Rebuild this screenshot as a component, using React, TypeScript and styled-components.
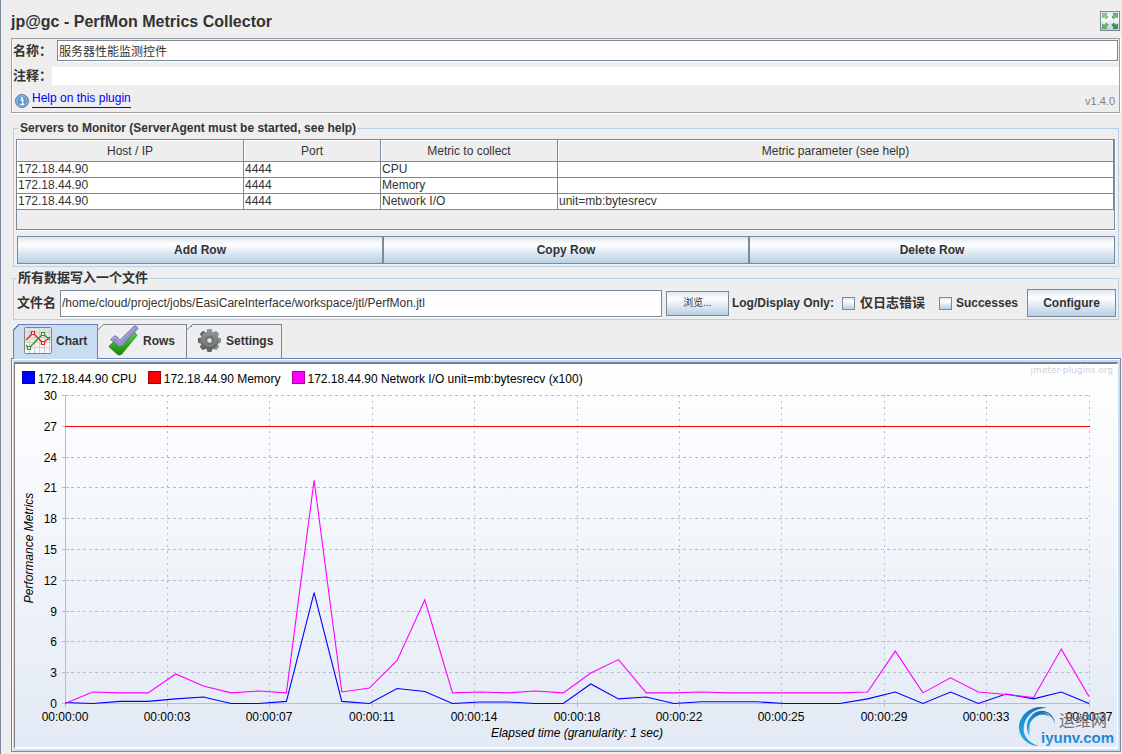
import React from "react";
import styled, { createGlobalStyle } from "styled-components";

const edge = "#7a8a99";
const accent = "#6382bf";
const selected = "#c8ddf2";
const metal = "linear-gradient(#dde8f3 0%, #ffffff 30%, #dde8f3 62%, #b8cfe5 100%)";

const GlobalStyle = createGlobalStyle`
  * { box-sizing: border-box; }
  body {
    margin: 0;
    background: #eeeeee;
    color: #333333;
    font: 12px/14px "Liberation Sans", "Noto Sans CJK SC", sans-serif;
  }
  button, input { font: inherit; color: inherit; }
`;

const Page = styled.div`
  min-height: 100vh;
  border-left: 1px solid ${edge};
  padding: 0 1px 2px 10px;
  position: relative;
`;

const Header = styled.header`
  display: flex;
  justify-content: space-between;
  align-items: center;
  height: 38px;
  padding: 4px 1px 0 0;
`;

const Title = styled.h1`
  margin: 0;
  padding-top: 2px;
  font-size: 16px;
  line-height: 20px;
`;

const ExpandButton = styled.button`
  width: 20px;
  height: 20px;
  padding: 0;
  border: 1px solid ${edge};
  background: ${metal};
  display: flex;
`;

const InfoPanel = styled.section`
  margin-right: 1px;
  padding-top: 1px;
  border: 1px solid #a0a0a0;
  box-shadow: inset 1px 0 0 #ffffff, 0 1px 0 #ffffff, 1px 0 0 #ffffff;
  display: flex;
  flex-direction: column;
  gap: 6px;
`;

const InfoRow = styled.div`
  display: flex;
  align-items: center;
`;

const BoldLabel = styled.label<{ $width?: number }>`
  width: ${(p) => (p.$width ? `${p.$width}px` : "auto")};
  padding-left: 1px;
  flex: none;
  font-size: 13px;
  font-weight: bold;
  white-space: nowrap;
`;

const TextField = styled.input<{ $height: number; $plain?: boolean }>`
  flex: 1;
  min-width: 0;
  height: ${(p) => p.$height}px;
  margin-right: ${(p) => (p.$plain ? 0 : 1)}px;
  padding: 0 1px;
  border: ${(p) => (p.$plain ? "none" : `1px solid ${edge}`)};
  border-radius: 0;
  background: #ffffff;
  box-shadow: ${(p) => (p.$plain ? "none" : "0 1px 0 #ffffff")};
  outline: none;
`;

const HelpRow = styled.div`
  display: flex;
  align-items: center;
  gap: 3px;
  height: 27px;
  margin-top: -6px;
  padding: 0 4px 0 3px;
`;

const HelpLink = styled.a`
  color: #0000ff;
  text-decoration: none;
  border-bottom: 1px solid #0000ff;
  line-height: 18px;
  height: 19px;
`;

const Version = styled.span`
  margin-left: auto;
  padding-top: 5px;
  color: #808080;
  font-size: 11px;
`;

const Group = styled.fieldset<{ $gap: number }>`
  min-width: 0;
  margin: ${(p) => p.$gap}px 2px 0;
  padding: 4px 2px 2px;
  border: 1px solid #b8cfe5;
`;

const GroupTitle = styled.legend<{ $large?: boolean }>`
  margin-left: ${(p) => (p.$large ? 0 : 2)}px;
  padding: 0 2px;
  font-size: ${(p) => (p.$large ? 13 : 12)}px;
  line-height: 14px;
  font-weight: bold;
`;

const TableFrame = styled.div`
  height: 91px;
  margin-right: 1px;
  border: 1px solid ${edge};
  box-shadow: 1px 1px 0 #ffffff;
`;

const Table = styled.table`
  width: 100%;
  table-layout: fixed;
  border-collapse: separate;
  border-spacing: 0;
`;

const HeadCell = styled.th`
  height: 22px;
  padding: 0;
  border-right: 1px solid ${edge};
  border-bottom: 1px solid ${edge};
  box-shadow: inset 1px 1px 0 #ffffff;
  font-weight: normal;
`;

const Cell = styled.td`
  height: 16px;
  padding: 0 1px;
  line-height: 15px;
  background: #ffffff;
  border-right: 1px solid ${edge};
  border-bottom: 1px solid ${edge};
`;

const ButtonRow = styled.div`
  display: grid;
  grid-template-columns: repeat(3, 1fr);
  margin: 6px 1px 0;
`;

const Button = styled.button<{ $height: number; $width?: number; $light?: boolean }>`
  height: ${(p) => p.$height}px;
  width: ${(p) => (p.$width ? `${p.$width}px` : "100%")};
  flex: none;
  padding: 0;
  border: 1px solid ${edge};
  border-radius: 0;
  background: ${metal};
  font-size: ${(p) => (p.$light ? 10 : 12)}px;
  font-weight: ${(p) => (p.$light ? "normal" : "bold")};
`;

const FileRow = styled.div`
  display: flex;
  align-items: center;
  gap: 3px;
  height: 28px;
`;

const CheckGroup = styled.div`
  display: flex;
  align-items: center;
  gap: 4px;
  margin-left: 5px;
  padding-right: 6px;
`;

const CheckBox = styled.input`
  appearance: none;
  width: 13px;
  height: 13px;
  margin: 0;
  border: 1px solid ${edge};
  background: ${metal};
`;

const BoldText = styled.span`
  font-weight: bold;
  white-space: nowrap;
`;

const TabBar = styled.div`
  display: flex;
  margin: 4px 2px 0;
`;

const Tab = styled.button<{ $active?: boolean; $width: number }>`
  position: relative;
  display: flex;
  align-items: center;
  gap: 4px;
  width: ${(p) => p.$width}px;
  height: ${(p) => (p.$active ? 35 : 34)}px;
  margin-bottom: ${(p) => (p.$active ? -1 : 0)}px;
  padding: 0 0 2px 10px;
  z-index: ${(p) => (p.$active ? 1 : 0)};
  border: 0 solid ${(p) => (p.$active ? accent : edge)};
  border-width: 1px 1px 0 ${(p) => (p.$active ? 1 : 0)}px;
  background: ${(p) => (p.$active ? selected : "#eeeeee")};
  font-weight: bold;
  &::before {
    content: "";
    position: absolute;
    top: -1px;
    left: ${(p) => (p.$active ? -1 : 0)}px;
    width: 7px;
    height: 7px;
    background: linear-gradient(
      135deg,
      #eeeeee calc(50% - 1px),
      ${(p) => (p.$active ? accent : edge)} calc(50% - 1px),
      ${(p) => (p.$active ? accent : edge)} 50%,
      transparent 50%
    );
  }
`;

const TabPanel = styled.section`
  padding: 3px 2px 2px;
  border: 1px solid ${accent};
  border-bottom-color: ${edge};
  border-right-color: ${edge};
  background: ${selected};
  box-shadow: inset 1px 1px 0 #ffffff;
`;

const ChartBox = styled.div`
  position: relative;
  border-style: solid;
  border-width: 2px 1px 2px 1px;
  border-color: #808080 #ffffff #ffffff #808080;
  background: linear-gradient(#ffffff, #e3eaf5);
  color: #000000;
`;

const Legend = styled.ul`
  display: flex;
  gap: 11px;
  height: 23px;
  margin: 0;
  padding: 7px 0 0 7px;
  list-style: none;
`;

const LegendItem = styled.li`
  display: flex;
  gap: 3px;
  height: 14px;
  line-height: 16px;
`;

const Swatch = styled.span<{ $color: string }>`
  width: 13px;
  height: 13px;
  background: ${(p) => p.$color};
  border: 1px solid rgba(0, 0, 0, 0.35);
`;

const Credit = styled.span`
  position: absolute;
  top: 0;
  right: 4px;
  color: #cdd0d8;
  font: 9px/12px "DejaVu Sans", sans-serif;
`;

const Plot = styled.svg`
  display: block;
  width: 100%;
  height: auto;
  font-size: 12px;
`;

const AxisCaption = styled.p`
  margin: 0;
  height: 22px;
  padding-left: 22px;
  text-align: center;
  line-height: 17px;
  font-style: italic;
`;

const Watermark = styled.div`
  position: absolute;
  right: 5px;
  bottom: 4px;
  width: 100px;
  height: 46px;
`;

type Row = [string, string, string, string];

const rows: Row[] = [
  ["172.18.44.90", "4444", "CPU", ""],
  ["172.18.44.90", "4444", "Memory", ""],
  ["172.18.44.90", "4444", "Network I/O", "unit=mb:bytesrecv"],
];

const series = [
  { name: "172.18.44.90 CPU", color: "#0000ff" },
  { name: "172.18.44.90 Memory", color: "#ff0000" },
  { name: "172.18.44.90 Network I/O unit=mb:bytesrecv (x100)", color: "#ff00ff" },
];

const cpu = [
  0.1, 0, 0.2, 0.2, 0.45, 0.63, 0, 0, 0.2, 10.8, 0.2, 0, 1.46, 1.17, 0, 0.15, 0.15, 0, 0, 1.9,
  0.45, 0.63, 0, 0.17, 0.17, 0.17, 0, 0, 0, 0.45, 1.12, 0, 1.12, 0, 0.93, 0.45, 1.12, 0,
];
const network = [
  0, 1.12, 1.03, 1.03, 2.87, 1.7, 1.03, 1.22, 1.03, 21.75, 1.12, 1.5, 4.2, 10.1, 1.03, 1.12, 1.03,
  1.22, 1.03, 2.97, 4.28, 1.03, 1.03, 1.12, 1.03, 1.03, 1.03, 1.03, 1.03, 1.12, 5.1, 1.03, 2.5,
  1.12, 0.88, 0.58, 5.3, 0.68,
];
const times = ["00", "03", "07", "11", "14", "18", "22", "25", "29", "33", "37"];

const plot = { left: 50, right: 1074, top: 8, bottom: 316 };
const px = (i: number) => plot.left + (i * (plot.right - plot.left)) / (cpu.length - 1);
const py = (v: number) => plot.bottom - (v * (plot.bottom - plot.top)) / 30;
const line = (data: number[]) => data.map((v, i) => `${px(i).toFixed(1)},${(py(v) + 0.5).toFixed(1)}`).join(" ");
const tickX = (i: number) => Math.floor(plot.left + (i * (plot.right - plot.left)) / 10);

function Chart() {
  return (
    <Plot viewBox="0 0 1102 338" role="img" aria-label="Performance metrics over elapsed time">
      <g stroke="#b9bdc7" fill="none">
        {Array.from({ length: 11 }, (_, i) => {
          const y = Math.round(py(i * 3)) + 0.5;
          const x = tickX(i) + 0.5;
          return (
            <g key={i}>
              {i > 0 && <path d={`M${plot.left} ${y}H${plot.right}`} strokeDasharray="3 3" />}
              {i > 0 && <path d={`M${x} ${plot.top}V${plot.bottom}`} strokeDasharray="2 4" />}
              <path d={`M${plot.left - 3} ${y}h7M${x} ${plot.bottom - 3}v7`} />
            </g>
          );
        })}
        <path d={`M${plot.left + 0.5} ${plot.top}V${plot.bottom + 0.5}H${plot.right}`} />
      </g>
      <g textAnchor="end">
        {Array.from({ length: 11 }, (_, i) => (
          <text key={i} x={42} y={Math.round(py(i * 3)) + 5}>{i * 3}</text>
        ))}
      </g>
      <g textAnchor="middle">
        {times.map((t, i) => (
          <text key={t} x={tickX(i)} y={334}>{`00:00:${t}`}</text>
        ))}
        <text transform="translate(18 161) rotate(-90)" fontStyle="italic">Performance Metrics</text>
      </g>
      <polyline points={line(cpu)} fill="none" stroke="#0000ff" strokeWidth="1.1" />
      <path d={`M${plot.left} ${Math.round(py(27)) + 0.5}H${plot.right + 1}`} stroke="#ff0000" />
      <polyline points={line(network)} fill="none" stroke="#ff00ff" strokeWidth="1.1" />
    </Plot>
  );
}

function ExpandIcon() {
  return (
    <svg width="18" height="18" viewBox="0 0 18 18">
      <defs>
        <path id="arrow" d="M1.5 1.500h4.500l-1.200 1.300 2.400 2.200-1.900 1.900-2.300-2.300-1.500 1.400z" strokeWidth=".7" />
      </defs>
      <use href="#arrow" fill="#8fd07d" stroke="#5aa94f" />
      <use href="#arrow" fill="#6cbc62" stroke="#428f40" transform="translate(18 0) scale(-1 1)" />
      <use href="#arrow" fill="#6cbc62" stroke="#428f40" transform="translate(0 18) scale(1 -1)" />
      <use href="#arrow" fill="#45934a" stroke="#2c6d33" transform="rotate(180 9 9)" />
    </svg>
  );
}

const InfoMark = styled.svg`
  width: 14px;
  height: 14px;
  margin-top: 4px;
`;

function InfoIcon() {
  return (
    <InfoMark viewBox="0 0 14 14">
      <circle cx="7" cy="7" r="6.500" fill="#5289c4" stroke="#5a7fa8" />
      <circle cx="7" cy="7" r="5.300" fill="#5f97d0" stroke="#b8d4ee" strokeWidth=".8" />
      <circle cx="7" cy="4" r="1.100" fill="#fff" />
      <path d="M5.500 6h2.300v4M5.300 10.300h3.800" stroke="#fff" strokeWidth="1.300" fill="none" />
    </InfoMark>
  );
}

function ChartIcon() {
  return (
    <svg width="28" height="28" viewBox="0 0 28 28">
      <rect x=".5" y=".5" width="27" height="26" rx="1" fill="#f7f7f7" stroke="#85857f" />
      <path d="M1 1h26v9L1 16z" fill="#dcdcdc" opacity=".7" />
      <path d="M5.500 1v25M10.500 1v25M15.500 1v25M20.500 1v25M25.500 1v25M1 5.500h26M1 10.500h26M1 15.500h26M1 20.500h26" stroke="#d0d0d0" fill="none" />
      <path d="M2 13l7-7 10 10 7-6" stroke="#d22" strokeWidth="1.300" fill="none" />
      <path d="M2 18l3 3L19 7l7 6" stroke="#3f8f1f" strokeWidth="1.300" fill="none" />
      <g fill="#fff" strokeWidth="1.200">
        <path d="M7.500 4.500h3v3h-3zM17.500 14.500h3v3h-3z" stroke="#d22" />
        <path d="M3.500 19.500h3v3h-3zM17.500 5.500h3v3h-3z" stroke="#3f8f1f" />
      </g>
    </svg>
  );
}

function RowsIcon() {
  return (
    <svg width="31" height="31" viewBox="0 0 31 31">
      <defs>
        <linearGradient id="green" x2="0" y2="1">
          <stop offset="0" stopColor="#56cf3c" />
          <stop offset="1" stopColor="#158b0c" />
        </linearGradient>
      </defs>
      <path d="M.8 21.500L5.500 17q1.500-.6 2.500.6l3.200 3.200L25 7.800q1.500-.8 2.500.4l1.300 2.300L13.500 29.300q-2.300 1.700-4.500-.3z" fill="url(#green)" stroke="#188010" strokeWidth=".8" />
      <path d="M2.500 14.500l4-3.500q1.500-.5 2.500.8l2.800 3.400L26 1.200q1.500-.8 2.600.2l1.400 2.200L14 20.800q-2.200 1.500-4.200-.2z" fill="#9291c9" stroke="#6f6eac" strokeWidth=".8" />
      <path d="M4 14.300l3-2.300 4.500 4.800L27 2.600" fill="none" stroke="#b5b4df" />
    </svg>
  );
}

function GearIcon() {
  return (
    <svg width="25" height="25" viewBox="0 0 26 26">
      <defs>
        <linearGradient id="steel" x2="0" y2="1">
          <stop offset="0" stopColor="#929796" />
          <stop offset="1" stopColor="#5c6261" />
        </linearGradient>
      </defs>
      <g fill="url(#steel)">
        {[0, 45, 90, 135].map((a) => (
          <rect key={a} x="10.200" y="1" width="5.600" height="24" rx="1.500" transform={`rotate(${a} 13 13)`} />
        ))}
        <circle cx="13" cy="13" r="9.700" />
      </g>
      <circle cx="13" cy="13" r="5.700" fill="#6f7574" stroke="#8e9392" />
      <circle cx="13" cy="13" r="2.800" fill="#e4e6e6" stroke="#555b5a" strokeWidth=".7" />
    </svg>
  );
}

function SiteMark() {
  return (
    <Watermark>
      <svg width="100" height="46" viewBox="0 0 100 46" role="img" aria-label="运维网 iyunv.com">
        <defs>
          <linearGradient id="swirl" x1="0" y1="1" x2="1" y2="0">
            <stop offset="0" stopColor="#22b4ee" />
            <stop offset="1" stopColor="#1560a8" />
          </linearGradient>
          <linearGradient id="wordmark" x2="0" y2="1">
            <stop offset="0" stopColor="#1268b8" />
            <stop offset="1" stopColor="#2aa2e6" />
          </linearGradient>
        </defs>
        <g fill="url(#swirl)">
          <path d="M30 4C18 0 4 8 2 21c-1 11 7 20 19 21C10 38 5 30 7 21 9 11 18 4 30 4z" />
          <path d="M38 20C37 8 25 3 16 10c-7 6-8 15-3 23-3-9-2-17 5-22 9-6 17-1 20 9z" />
          <path d="M33 13C27 6 19 7 14 13c-4 5-4 11-1 17-1-7-1-11 3-15 5-5 11-6 17-2z" />
        </g>
        <text x="42" y="22" fontSize="16" fill="#6f6f76" fontFamily='"Noto Sans CJK SC", sans-serif'>运维网</text>
        <text x="24" y="39" fontSize="15" fontWeight="bold" fill="url(#wordmark)">iyunv.com</text>
      </svg>
    </Watermark>
  );
}

export default function App() {
  return (
    <>
      <GlobalStyle />
      <Page>
        <Header>
          <Title>jp@gc - PerfMon Metrics Collector</Title>
          <ExpandButton aria-label="Expand"><ExpandIcon /></ExpandButton>
        </Header>

        <InfoPanel>
          <InfoRow>
            <BoldLabel htmlFor="name" $width={45}>名称：</BoldLabel>
            <TextField id="name" $height={21} defaultValue="服务器性能监测控件" />
          </InfoRow>
          <InfoRow>
            <BoldLabel htmlFor="comment" $width={40}>注释：</BoldLabel>
            <TextField id="comment" $height={18} $plain />
          </InfoRow>
          <HelpRow>
            <InfoIcon />
            <HelpLink href="#help">Help on this plugin</HelpLink>
            <Version>v1.4.0</Version>
          </HelpRow>
        </InfoPanel>

        <Group $gap={8}>
          <GroupTitle>Servers to Monitor (ServerAgent must be started, see help)</GroupTitle>
          <TableFrame>
            <Table>
              <colgroup>
                <col width="227" />
                <col width="137" />
                <col width="177" />
                <col />
              </colgroup>
              <thead>
                <tr>
                  <HeadCell>Host / IP</HeadCell>
                  <HeadCell>Port</HeadCell>
                  <HeadCell>Metric to collect</HeadCell>
                  <HeadCell>Metric parameter (see help)</HeadCell>
                </tr>
              </thead>
              <tbody>
                {rows.map((row) => (
                  <tr key={row[2]}>
                    {row.map((value, i) => <Cell key={i}>{value}</Cell>)}
                  </tr>
                ))}
              </tbody>
            </Table>
          </TableFrame>
          <ButtonRow>
            <Button $height={28}>Add Row</Button>
            <Button $height={28}>Copy Row</Button>
            <Button $height={28}>Delete Row</Button>
          </ButtonRow>
        </Group>

        <Group $gap={4}>
          <GroupTitle $large>所有数据写入一个文件</GroupTitle>
          <FileRow>
            <BoldLabel htmlFor="file" $width={41}>文件名</BoldLabel>
            <TextField id="file" $height={27} defaultValue="/home/cloud/project/jobs/EasiCareInterface/workspace/jtl/PerfMon.jtl" />
            <Button $height={25} $width={63} $light>浏览...</Button>
            <BoldText>Log/Display Only:</BoldText>
            <CheckGroup>
              <CheckBox type="checkbox" id="errors" />
              <BoldLabel htmlFor="errors">仅日志错误</BoldLabel>
            </CheckGroup>
            <CheckGroup>
              <CheckBox type="checkbox" id="successes" />
              <BoldText as="label" htmlFor="successes">Successes</BoldText>
            </CheckGroup>
            <Button $height={28} $width={89}>Configure</Button>
          </FileRow>
        </Group>

        <TabBar role="tablist">
          <Tab role="tab" aria-selected $active $width={85}><ChartIcon />Chart</Tab>
          <Tab role="tab" $width={89}><RowsIcon />Rows</Tab>
          <Tab role="tab" $width={95}><GearIcon />Settings</Tab>
        </TabBar>
        <TabPanel role="tabpanel">
          <ChartBox>
            <Legend>
              {series.map((s) => (
                <LegendItem key={s.name}>
                  <Swatch $color={s.color} />
                  {s.name}
                </LegendItem>
              ))}
            </Legend>
            <Credit>jmeter-plugins.org</Credit>
            <Chart />
            <AxisCaption>Elapsed time (granularity: 1 sec)</AxisCaption>
          </ChartBox>
        </TabPanel>
        <SiteMark />
      </Page>
    </>
  );
}
